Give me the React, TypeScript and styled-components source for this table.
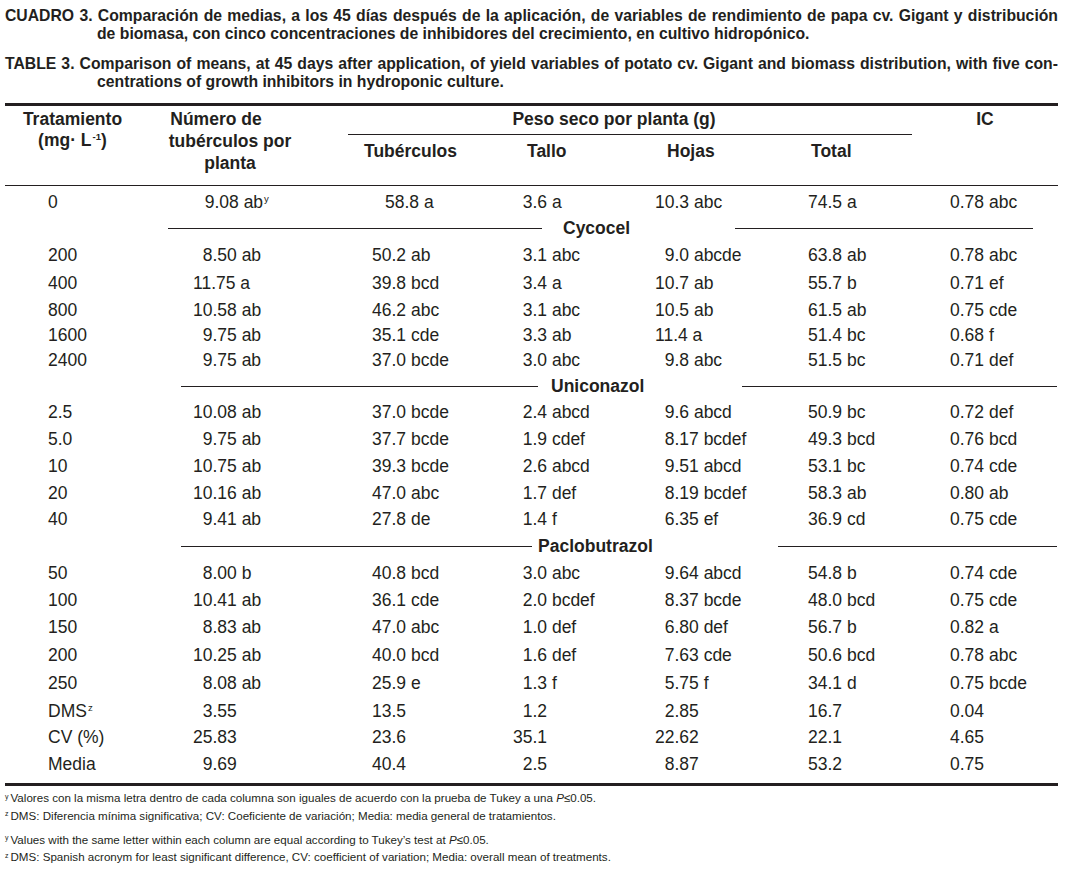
import React from 'react';
import styled, { createGlobalStyle } from 'styled-components';

const GlobalStyle = createGlobalStyle`
  html, body {
    margin: 0;
    padding: 0;
    background: #ffffff;
  }
  body {
    font-family: "Liberation Sans", Arial, sans-serif;
    color: #231f20;
  }
`;

const INK = '#231f20';

const Page = styled.div`
  width: 1065px;
  padding-top: 7px;
  font-family: "Liberation Sans", Arial, sans-serif;
  color: ${INK};
`;

const Caption = styled.div`
  margin: 0 7px 12px 5px;
  font-size: 15.75px;
  font-weight: 700;
  line-height: 18px;

  &:last-of-type {
    margin-bottom: 16px;
  }
`;

const CaptionLine = styled.div<{ $justify?: boolean; $indent?: number }>`
  white-space: nowrap;
  padding-left: ${(p) => p.$indent ?? 0}px;
  text-align: ${(p) => (p.$justify ? 'justify' : 'left')};
  text-align-last: ${(p) => (p.$justify ? 'justify' : 'left')};
  ${(p) => (p.$justify ? 'white-space: normal;' : '')}
`;

const Rule = styled.div<{ $weight: number }>`
  margin: 0 7px 0 5px;
  height: ${(p) => p.$weight}px;
  background: ${INK};
`;

const HeadRow = styled.div`
  display: flex;
  height: 79px;
  padding-top: 2.5px;
  box-sizing: border-box;
  font-size: 17.5px;
  font-weight: 700;
`;

const HeadCell = styled.div<{ $left: number; $width: number }>`
  margin-left: ${(p) => p.$left}px;
  width: ${(p) => p.$width}px;
  text-align: center;
  line-height: 22px;
`;

const HeadLine = styled.div<{ $lh?: number; $shift?: number }>`
  line-height: ${(p) => p.$lh ?? 22}px;
  position: relative;
  left: ${(p) => p.$shift ?? 0}px;
`;

const GroupHead = styled.div`
  margin-left: 28px;
  width: 564px;
  display: flex;
  flex-direction: column;
`;

const GroupTitle = styled.div`
  line-height: 22px;
  text-align: center;
  padding-right: 32px;
`;

const SubRule = styled.div`
  margin-top: 4px;
  height: 1px;
  background: ${INK};
`;

const SubHeads = styled.div`
  display: grid;
  grid-template-columns: 163px 140px 144px auto;
  padding-left: 16px;
  margin-top: 5px;
  line-height: 22px;
`;

const Body = styled.div`
  padding-top: 2.5px;
  padding-bottom: 6px;
  font-size: 17.5px;
`;

const DataRow = styled.div<{ $h: number }>`
  display: grid;
  grid-template-columns: 145px 179px 141px 142px 153px 142px auto;
  padding-left: 48px;
  height: ${(p) => p.$h}px;
  align-items: center;
  white-space: nowrap;
`;

const Cell = styled.div<{ $pad: number; $shift?: number }>`
  padding-left: calc(${(p) => p.$pad * 0.556}em + ${(p) => p.$shift ?? 0}px);
`;

const Sup = styled.sup`
  font-size: 0.55em;
  vertical-align: 0.6em;
  line-height: 0;
  margin-left: 1px;
`;

const SectionRow = styled.div<{ $from: number; $to: number; $h: number }>`
  display: flex;
  align-items: center;
  height: ${(p) => p.$h}px;
  padding-left: ${(p) => p.$from}px;
  width: ${(p) => p.$to}px;
  box-sizing: border-box;
`;

const SectionLine = styled.div<{ $width?: number }>`
  height: 1px;
  background: ${INK};
  ${(p) => (p.$width ? `width: ${p.$width}px;` : 'flex: 1;')}
`;

const SectionLabel = styled.div<{ $before: number; $after: number }>`
  font-weight: 700;
  margin: 0 ${(p) => p.$after}px 0 ${(p) => p.$before}px;
`;

const Notes = styled.div`
  margin: 3.5px 0 0 5px;
  font-size: 11.6px;
  line-height: 17.5px;
`;

const NoteGroup = styled.div`
  margin-bottom: 6.5px;
`;

const NoteSup = styled.sup`
  font-size: 0.6em;
  vertical-align: 0.5em;
  line-height: 0;
  margin-right: 2px;
`;

type Row = { kind: 'row'; cells: string[]; h: number; shift?: number[] };
type Section = {
  kind: 'section';
  label: string;
  h: number;
  from: number;
  leftEnd: number;
  textStart: number;
  rightStart: number;
  to: number;
};

const ROWS: (Row | Section)[] = [
  { kind: 'row', h: 27, cells: ['0', '9.08 ab^y', '58.8 a', '3.6 a', '10.3 abc', '74.5 a', '0.78 abc'], shift: [0, 2, 13, 0, 0, 0, 0] },
  { kind: 'section', h: 26, label: 'Cycocel', from: 168, leftEnd: 542, textStart: 563, rightStart: 668, to: 1033 },
  { kind: 'row', h: 28, cells: ['200', '8.50 ab', '50.2 ab', '3.1 abc', '9.0 abcde', '63.8 ab', '0.78 abc'] },
  { kind: 'row', h: 28, cells: ['400', '11.75 a', '39.8 bcd', '3.4 a', '10.7 ab', '55.7 b', '0.71 ef'] },
  { kind: 'row', h: 25, cells: ['800', '10.58 ab', '46.2 abc', '3.1 abc', '10.5 ab', '61.5 ab', '0.75 cde'] },
  { kind: 'row', h: 25, cells: ['1600', '9.75 ab', '35.1 cde', '3.3 ab', '11.4 a', '51.4 bc', '0.68 f'] },
  { kind: 'row', h: 25.5, cells: ['2400', '9.75 ab', '37.0 bcde', '3.0 abc', '9.8 abc', '51.5 bc', '0.71 def'] },
  { kind: 'section', h: 26.5, label: 'Uniconazol', from: 181, leftEnd: 538, textStart: 551, rightStart: 649, to: 1057 },
  { kind: 'row', h: 26.5, cells: ['2.5', '10.08 ab', '37.0 bcde', '2.4 abcd', '9.6 abcd', '50.9 bc', '0.72 def'] },
  { kind: 'row', h: 26.5, cells: ['5.0', '9.75 ab', '37.7 bcde', '1.9 cdef', '8.17 bcdef', '49.3 bcd', '0.76 bcd'] },
  { kind: 'row', h: 27, cells: ['10', '10.75 ab', '39.3 bcde', '2.6 abcd', '9.51 abcd', '53.1 bc', '0.74 cde'] },
  { kind: 'row', h: 27, cells: ['20', '10.16 ab', '47.0 abc', '1.7 def', '8.19 bcdef', '58.3 ab', '0.80 ab'] },
  { kind: 'row', h: 26.5, cells: ['40', '9.41 ab', '27.8 de', '1.4 f', '6.35 ef', '36.9 cd', '0.75 cde'] },
  { kind: 'section', h: 26.5, label: 'Paclobutrazol', from: 181, leftEnd: 532, textStart: 538, rightStart: 663, to: 1057 },
  { kind: 'row', h: 27, cells: ['50', '8.00 b', '40.8 bcd', '3.0 abc', '9.64 abcd', '54.8 b', '0.74 cde'] },
  { kind: 'row', h: 27, cells: ['100', '10.41 ab', '36.1 cde', '2.0 bcdef', '8.37 bcde', '48.0 bcd', '0.75 cde'] },
  { kind: 'row', h: 27.5, cells: ['150', '8.83 ab', '47.0 abc', '1.0 def', '6.80 def', '56.7 b', '0.82 a'] },
  { kind: 'row', h: 28.5, cells: ['200', '10.25 ab', '40.0 bcd', '1.6 def', '7.63 cde', '50.6 bcd', '0.78 abc'] },
  { kind: 'row', h: 28, cells: ['250', '8.08 ab', '25.9 e', '1.3 f', '5.75 f', '34.1 d', '0.75 bcde'] },
  { kind: 'row', h: 27, cells: ['DMS^z', '3.55', '13.5', '1.2', '2.85', '16.7', '0.04'] },
  { kind: 'row', h: 26.5, cells: ['CV (%)', '25.83', '23.6', '35.1', '22.62', '22.1', '4.65'] },
  { kind: 'row', h: 26, cells: ['Media', '9.69', '40.4', '2.5', '8.87', '53.2', '0.75'] },
];

// integer digits each column is aligned on
const MAX_INT = [0, 2, 2, 2, 2, 2, 1];

function withSup(text: string) {
  const [main, sup] = text.split('^');
  return (
    <>
      {main}
      {sup && <Sup>{sup}</Sup>}
    </>
  );
}

function padFor(text: string, col: number) {
  if (col === 0) return 0;
  const digits = text.split('.')[0].length;
  return Math.max(0, MAX_INT[col] - digits);
}

export default function App() {
  return (
    <Page>
      <GlobalStyle />
      <Caption>
        <CaptionLine $justify>
          CUADRO 3. Comparación de medias, a los 45 días después de la aplicación, de variables de rendimiento de papa cv. Gigant y distribución
        </CaptionLine>
        <CaptionLine $indent={92}>
          de biomasa, con cinco concentraciones de inhibidores del crecimiento, en cultivo hidropónico.
        </CaptionLine>
      </Caption>
      <Caption>
        <CaptionLine $justify>
          TABLE 3. Comparison of means, at 45 days after application, of yield variables of potato cv. Gigant and biomass distribution, with five con-
        </CaptionLine>
        <CaptionLine $indent={92}>centrations of growth inhibitors in hydroponic culture.</CaptionLine>
      </Caption>

      <Rule $weight={2.5} />
      <HeadRow>
        <HeadCell $left={5} $width={135}>
          <HeadLine>Tratamiento</HeadLine>
          <HeadLine $lh={20}>
            (mg· L<Sup>-1</Sup>)
          </HeadLine>
        </HeadCell>
        <HeadCell $left={0} $width={180}>
          <HeadLine $shift={-14}>Número de</HeadLine>
          <HeadLine>tubérculos por</HeadLine>
          <HeadLine>planta</HeadLine>
        </HeadCell>
        <GroupHead>
          <GroupTitle>Peso seco por planta (g)</GroupTitle>
          <SubRule />
          <SubHeads>
            <div>Tubérculos</div>
            <div>Tallo</div>
            <div>Hojas</div>
            <div>Total</div>
          </SubHeads>
        </GroupHead>
        <HeadCell $left={0} $width={146}>
          <HeadLine>IC</HeadLine>
        </HeadCell>
      </HeadRow>
      <Rule $weight={1.5} />

      <Body>
        {ROWS.map((r, i) => {
          if (r.kind === 'section') {
            return (
              <SectionRow key={i} $from={r.from} $to={r.to} $h={r.h}>
                <SectionLine $width={r.leftEnd - r.from} />
                <SectionLabel $before={r.textStart - r.leftEnd} $after={r.rightStart - r.textStart}>
                  {r.label}
                </SectionLabel>
                <SectionLine />
              </SectionRow>
            );
          }
          return (
            <DataRow key={i} $h={r.h}>
              {r.cells.map((c, j) => (
                <Cell key={j} $pad={padFor(c, j)} $shift={r.shift?.[j]}>
                  {withSup(c)}
                </Cell>
              ))}
            </DataRow>
          );
        })}
      </Body>
      <Rule $weight={2.5} />

      <Notes>
        <NoteGroup>
          <div>
            <NoteSup>y</NoteSup>Valores con la misma letra dentro de cada columna son iguales de acuerdo con la prueba de Tukey a una <i>P</i>≤0.05.
          </div>
          <div>
            <NoteSup>z</NoteSup>DMS: Diferencia mínima significativa; CV: Coeficiente de variación; Media: media general de tratamientos.
          </div>
        </NoteGroup>
        <div>
          <div>
            <NoteSup>y</NoteSup>Values with the same letter within each column are equal according to Tukey’s test at <i>P</i>≤0.05.
          </div>
          <div>
            <NoteSup>z</NoteSup>DMS: Spanish acronym for least significant difference, CV: coefficient of variation; Media: overall mean of treatments.
          </div>
        </div>
      </Notes>
    </Page>
  );
}
